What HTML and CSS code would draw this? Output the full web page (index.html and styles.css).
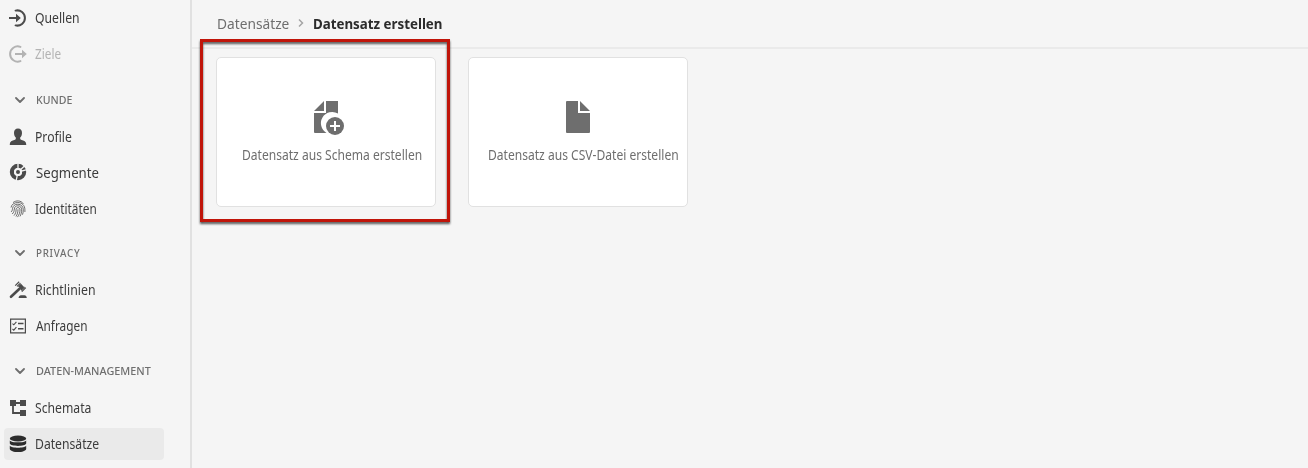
FILE: index.html
```html
<!DOCTYPE html>
<html lang="de">
<head>
<meta charset="utf-8">
<title>Datensatz erstellen</title>
<link rel="stylesheet" href="styles.css">
</head>
<body>
<div class="app">
  <nav class="sidebar">
    <a class="item"><svg class="icon" viewBox="0 0 18 18"><path d="M6.600 1.600a7.600 7.600 0 1 1 0 14.800" fill="none" stroke="currentColor" stroke-width="2" stroke-linecap="round"/><path d="M0 8h7V4.800L11.800 9 7 13.200V10H0z"/></svg><span class="label quellen">Quellen</span></a>
    <a class="item disabled"><svg class="icon" viewBox="0 0 18 18"><path d="M11.400 1.900a7.600 7.600 0 1 0 0 14.200" fill="none" stroke="currentColor" stroke-width="2" stroke-linecap="round"/><path d="M6 8h7V4.800L17.800 9 13 13.200V10H6z"/></svg><span class="label ziele">Ziele</span></a>
    <h2 class="heading"><svg class="chevron" viewBox="0 0 10 6"><path d="M1 1l4 4 4-4"/></svg><span class="label kunde">KUNDE</span></h2>
    <a class="item"><svg class="icon" viewBox="0 0 18 18"><path d="M9 .5c2.600 0 4 1.800 4 4.400 0 1.800-.7 3.700-1.800 4.700v1.200c0 .5.3.7.8.9 3.200.9 5.200 2 5.200 4.200v1H.8v-1c0-2.200 2-3.300 5.200-4.200.5-.2.800-.4.800-.9V9.600C5.700 8.600 5 6.700 5 4.900 5 2.300 6.400.5 9 .5z"/></svg><span class="label profile">Profile</span></a>
    <a class="item segments"><svg class="icon" viewBox="0 0 18 18"><circle cx="9" cy="9" r="6.100" fill="none" stroke="currentColor" stroke-width="4.200"/><path d="M9 9V-.5M9 9l7.500-7M9 9l9.500-2.500M9 9l-2 9.500" stroke="#f5f5f5" stroke-width="1.300"/><circle cx="9" cy="9" r="4" fill="#f5f5f5"/><circle cx="9" cy="9" r="2"/></svg><span class="label segmente">Segmente</span></a>
    <a class="item"><svg class="icon print" viewBox="0 0 18 18"><path d="M4 2.600C7 .1 12 .3 14.400 3.800M2 7.500C2.500 4.500 5.300 2.500 8.700 2.500c4.300 0 7.200 3 7.200 7.300v2.200M2 12c1.400-1.200 1.300-2.200 1.500-3.500C4 5.700 6 4.200 8.800 4.200c3.300 0 5.500 2.300 5.500 5.500 0 2-.3 3.500-.8 5M3.200 14c1.800-1.600 1.900-3.200 2.100-5 .2-2 1.500-3.200 3.500-3.200 2.400 0 3.900 1.700 3.900 4 0 2.400-.7 4.600-1.700 6.600M5 15.600c1.700-1.900 2-4 2.100-6.100.1-1.200.7-1.900 1.800-1.900 1.400 0 2.100 1 2.100 2.300 0 2.500-.9 5-2.500 7.200M7 16.500c1.400-2.100 2-4.500 2-7.200"/></svg><span class="label ident">Identitäten</span></a>
    <h2 class="heading"><svg class="chevron" viewBox="0 0 10 6"><path d="M1 1l4 4 4-4"/></svg><span class="label privacy">PRIVACY</span></h2>
    <a class="item"><svg class="icon" viewBox="0 0 18 18"><path d="M2 15.800L10.500 7.800" stroke="currentColor" stroke-width="2.600" stroke-linecap="round"/><path d="M9 5.200l3-2.500 3 3.300-2.700 3zM9.600 17c.2-1.900 1-2.800 2.400-2.800h3.400c1.400 0 2.200.9 2.400 2.800z"/><path d="M6.200 4.600L10.200.8M12.800 10.600l4-4M8 5.400l3.500-3.200M12 9.200l3.500-3.200" stroke="currentColor" stroke-width="1.200"/></svg><span class="label richt">Richtlinien</span></a>
    <a class="item"><svg class="icon" viewBox="0 0 18 18"><path d="M1.600 2.100h14.800v13.800H1.600z" fill="none" stroke="currentColor" stroke-width="1.200"/><path d="M3.500 6.600l1.300 1.200 2.600-3M3.500 12l1.300 1.200 2.600-3" fill="none" stroke="currentColor" stroke-width="1.100"/><path d="M9 6.500h5.500M9 11.700h5.500" stroke="currentColor" stroke-width="1.600"/></svg><span class="label anfragen">Anfragen</span></a>
    <h2 class="heading"><svg class="chevron" viewBox="0 0 10 6"><path d="M1 1l4 4 4-4"/></svg><span class="label management">DATEN-MANAGEMENT</span></h2>
    <a class="item"><svg class="icon" viewBox="0 0 18 18"><path d="M1 1h6v6H1zM11 1h6v6h-6zM11 11h6v6h-6z"/><path d="M6 4h6M4 6v8h8" fill="none" stroke="currentColor" stroke-width="1.800"/></svg><span class="label schemata">Schemata</span></a>
    <a class="item selected"><svg class="icon" viewBox="0 0 18 18"><ellipse cx="9" cy="3.500" rx="8.200" ry="3"/><path d="M.8 5.400C2.500 8 15.500 8 17.200 5.400v3.200C16.500 11.800 1.500 11.800.8 8.600zM.8 10.700c1.700 2.600 14.700 2.600 16.400 0v3.200c-.7 4.100-15.700 4.100-16.400 0z"/></svg><span class="label datensaetze">Datensätze</span></a>
  </nav>
  <main class="main">
    <header class="breadcrumbs">
      <span class="crumb">Datensätze</span>
      <svg class="separator" viewBox="0 0 6 10"><path d="M1 1.500L4.500 5 1 8.500"/></svg>
      <strong class="current">Datensatz erstellen</strong>
    </header>
    <div class="cards">
      <section class="card">
        <svg class="card-icon" viewBox="0 0 32 36"><path d="M1 11L11 1v10zM13 1h12v12.500A11 11 0 0 0 13.500 33H2a1 1 0 0 1-1-1V13h12z"/><circle cx="22" cy="26" r="9"/><path d="M17 26h10M22 21v10" stroke="#fff" stroke-width="2"/></svg>
        <span class="caption schema">Datensatz aus Schema erstellen</span>
        <div class="highlight"></div>
      </section>
      <section class="card">
        <svg class="card-icon" viewBox="0 0 32 36"><path d="M5 1h11v12h12v19a1 1 0 0 1-1 1H5a1 1 0 0 1-1-1V2a1 1 0 0 1 1-1zM18 1l10 10H18z"/></svg>
        <span class="caption csv">Datensatz aus CSV-Datei erstellen</span>
      </section>
    </div>
  </main>
</div>
</body>
</html>
```
FILE: styles.css
```css
* { box-sizing: border-box; }
body {
  margin: 0;
  background: #f5f5f5;
  color: #4b4b4b;
  font: 14px/20px "Noto Sans", "Open Sans", sans-serif;
}
.app { display: flex; height: 468px; overflow: hidden; }
.sidebar {
  display: grid;
  grid-template-rows: 36px 36px 47px 36px 36px 36px 45px 36px 36px 46px 36px 36px;
  align-content: start;
  flex: none;
  width: 192px;
  padding: 0 26px 0 4px;
  border-right: 2px solid #e1e1e1;
}
.item {
  display: flex;
  align-items: center;
  gap: 8px;
  height: 32px;
  margin-top: 2px;
  padding-left: 5px;
  border-radius: 4px;
}
.icon { flex: none; width: 18px; height: 18px; fill: currentColor; }
.print path { fill: none; stroke: currentColor; stroke-width: 0.8; }
.disabled { color: #b3b3b3; }
.selected { background: #eaeaea; }
.selected .icon { color: #2c2c2c; }
.heading {
  display: flex;
  align-items: center;
  align-self: end;
  gap: 11px;
  height: 39px;
  margin: 0;
  padding-left: 11px;
  color: #6e6e6e;
  font-size: 11px;
  font-weight: 500;
}
.chevron { width: 10px; height: 6px; fill: none; stroke: #6e6e6e; stroke-width: 1.8; stroke-linecap: round; stroke-linejoin: round; }
.label, .crumb, .current, .caption {
  white-space: nowrap;
  transform: scaleX(0.87);
  transform-origin: left center;
}
.label { color: #3c3c3c; }
.disabled .label { color: #b3b3b3; }
.heading .label { color: #6e6e6e; }
.quellen { transform: scaleX(0.87); }
.ziele { transform: scaleX(0.84); }
.kunde { transform: scaleX(0.96); }
.segments { height: 30px; }
.segmente { margin-left: 1px; font-size: 15px; transform: scaleX(0.88); }
.ident { transform: scaleX(0.845); }
.privacy { letter-spacing: 0.8px; transform: scaleX(0.89); }
.richt { transform: scaleX(0.88); }
.anfragen { margin-left: 1px; transform: scaleX(0.845); }
.management { transform: scaleX(0.985); }
.main { flex: 1; min-width: 0; }
.breadcrumbs {
  display: grid;
  grid-template-columns: 81px 15px auto;
  align-items: center;
  height: 49px;
  padding: 0 0 2px 25px;
  border-bottom: 2px solid #eaeaea;
  color: #6e6e6e;
  font-size: 15px;
}
.crumb { transform: scaleX(0.915); }
.separator { width: 6px; height: 10px; fill: none; stroke: #a5a5a5; stroke-width: 1.5; }
.current { color: #2c2c2c; font-weight: 700; transform: scaleX(0.888); }
.cards { display: flex; gap: 32px; padding: 8px 24px; }
.card {
  position: relative;
  display: flex;
  flex-direction: column;
  align-items: flex-start;
  width: 220px;
  height: 150px;
  padding-top: 42px;
  border: 1px solid #e1e1e1;
  border-radius: 5px;
  background: #fff;
  color: #6e6e6e;
}
.card-icon { width: 32px; height: 36px; margin-left: 96px; fill: currentColor; }
.card + .card .card-icon { margin-left: 93px; }
.caption { margin-top: 9px; transform: scaleX(0.862); }
.schema { margin-left: 25px; }
.csv { margin-left: 19px; }
.highlight {
  position: absolute;
  top: -19px;
  left: -17px;
  width: 250px;
  height: 183px;
  border: 3px solid #c0150a;
  filter: drop-shadow(0 2px 1px rgba(0, 0, 0, 0.65));
}
```
